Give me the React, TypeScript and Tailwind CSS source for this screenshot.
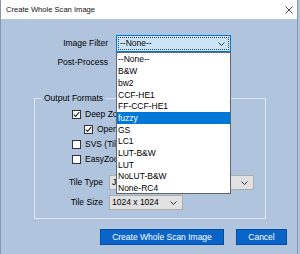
import React from "react";

const font = { fontFamily: '"Liberation Sans", Arial, sans-serif' };

const filters = [
  "--None--",
  "B&W",
  "bw2",
  "CCF-HE1",
  "FF-CCF-HE1",
  "fuzzy",
  "GS",
  "LC1",
  "LUT-B&W",
  "LUT",
  "NoLUT-B&W",
  "None-RC4",
];

const Chevron = () => (
  <svg width="7" height="4" viewBox="0 0 7 4" className="shrink-0">
    <polyline points="0.5,0.5 3.5,3.5 6.5,0.5" fill="none" stroke="#333" strokeWidth="1" />
  </svg>
);

const Check = ({ checked }: { checked: boolean }) => (
  <span className="w-[9px] h-[9px] border border-[#333] bg-white flex items-center justify-center shrink-0">
    {checked && (
      <svg width="7" height="7" viewBox="0 0 7 7">
        <polyline points="0.8,3.6 2.6,5.4 6.2,1.2" fill="none" stroke="#222" strokeWidth="1.1" />
      </svg>
    )}
  </span>
);

// labels run under the open list, so they are clipped at its left edge
const CheckRow = ({ label, checked, indent }: { label: string; checked: boolean; indent?: boolean }) => (
  <div className={`h-[15px] flex items-center gap-[4px] ${indent ? "pl-[12px]" : ""}`}>
    <Check checked={checked} />
    <span className={`overflow-hidden whitespace-nowrap ${indent ? "w-[20px]" : "w-[32px]"}`}>{label}</span>
  </div>
);

const Select = ({ value, width, clip }: { value: string; width: string; clip?: string }) => (
  <div className={`${width} h-[15px] bg-[#e1e1e1] border border-[#adadad] flex items-center justify-between pl-[2px] pr-[5px]`}>
    <span className={`overflow-hidden whitespace-nowrap ${clip ?? ""}`}>{value}</span>
    <Chevron />
  </div>
);

export default function App() {
  return (
    <div className="w-[300px] h-[254px] bg-[#b0c4de] text-[8.5px] text-black overflow-hidden" style={font}>
      <div className="w-[298px] h-[254px] border-x border-[#8796ab] flex flex-col">
        {/* title bar */}
        <div className="h-[19px] bg-white flex items-center justify-between pl-[5px] pr-[4px] shrink-0">
          <span className="text-[7.6px] text-[#111]">Create Whole Scan Image</span>
          <svg width="8" height="8" viewBox="0 0 8 8">
            <path d="M0.5 0.5 L7.5 7.5 M7.5 0.5 L0.5 7.5" stroke="#333" strokeWidth="0.9" />
          </svg>
        </div>

        {/* image filter */}
        <div className="flex items-center mt-[16px]">
          <div className="w-[107px] text-right">Image Filter</div>
          <div className="relative ml-[8px]">
            <div className="w-[115px] h-[17px] bg-[#cce4f7] border border-[#0078d7] p-[1px]">
              <div className="h-full border border-dotted border-[#444] flex items-center justify-between pl-[1px] pr-[3px]">
                <span>--None--</span>
                <Chevron />
              </div>
            </div>
            <div className="absolute top-full left-0 w-[115px] h-[142px] bg-white border border-[#5f6670] z-10 py-[1px]">
              {filters.map((f) => (
                <div
                  key={f}
                  className={`h-[11.7px] flex items-center pl-[1px] ${f === "fuzzy" ? "bg-[#0078d7] text-white" : ""}`}
                >
                  {f}
                </div>
              ))}
            </div>
          </div>
        </div>

        {/* post process */}
        <div className="flex items-center mt-[3px]">
          <div className="w-[107px] text-right">Post-Process</div>
          <div className="ml-[8px]">
            <Select value="None" width="w-[115px]" clip="w-0" />
          </div>
        </div>

        {/* output formats */}
        <fieldset className="ml-[33px] w-[232px] mt-[22px] border border-[#dfe6ef] pb-[8px]">
          <legend className="ml-[6px] px-[3px] leading-[12px]">Output Formats</legend>
          <div className="mt-[3px] pl-[37px]">
            <CheckRow label="Deep Zoom" checked />
            <CheckRow label="OpenSeadragon" checked indent />
            <CheckRow label="SVS (Tiled)" checked={false} />
            <CheckRow label="EasyZoom" checked={false} />
          </div>
          <div className="mt-[8px] flex flex-col gap-[5px]">
            <div className="flex items-center">
              <div className="w-[68px] text-right">Tile Type</div>
              <div className="ml-[6px]">
                <Select value="JPEG" width="w-[145px]" clip="w-[4px]" />
              </div>
            </div>
            <div className="flex items-center">
              <div className="w-[68px] text-right">Tile Size</div>
              <div className="ml-[6px]">
                <Select value="1024 x 1024" width="w-[74px]" />
              </div>
            </div>
          </div>
        </fieldset>

        {/* buttons */}
        <div className="flex justify-end gap-[12px] mt-[10px] pr-[10px]">
          <button className="w-[124px] h-[16px] bg-[#0a64c8] border border-[#0050a8] text-white">
            Create Whole Scan Image
          </button>
          <button className="w-[51px] h-[16px] bg-[#0a64c8] border border-[#0050a8] text-white">
            Cancel
          </button>
        </div>
      </div>
    </div>
  );
}
